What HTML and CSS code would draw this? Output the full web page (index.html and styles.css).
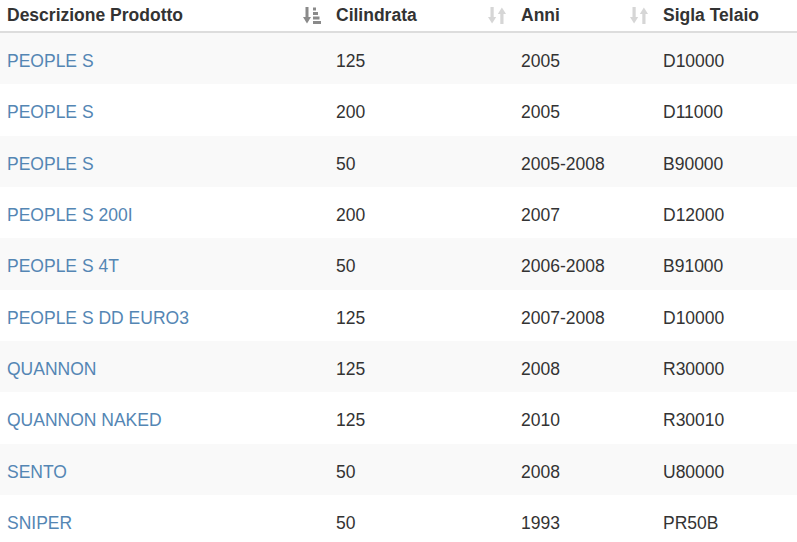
FILE: index.html
```html
<!DOCTYPE html>
<html>
<head>
<meta charset="utf-8">
<link rel="stylesheet" href="styles.css">
</head>
<body>
<table class="grid">
  <colgroup>
    <col class="c1"><col class="c2"><col class="c3"><col class="c4">
  </colgroup>
  <thead>
    <tr>
      <th><div class="th-in"><span>Descrizione Prodotto</span>
        <svg class="sort active" viewBox="0 0 18 17" width="18" height="17">
          <rect x="2.5" y="0" width="3" height="11"/>
          <polygon points="0,10 8,10 4,16.5"/>
          <rect x="10" y="0.5" width="3" height="3"/>
          <rect x="10" y="5" width="5" height="3"/>
          <rect x="10" y="9.5" width="6.5" height="3"/>
          <rect x="10" y="14" width="8" height="3"/>
        </svg></div></th>
      <th><div class="th-in"><span>Cilindrata</span>
        <svg class="sort" viewBox="0 0 18 17" width="18" height="17">
          <rect x="2.5" y="0" width="3.2" height="11"/>
          <polygon points="0,10 8.2,10 4.1,16.5"/>
          <rect x="12.3" y="6" width="3.2" height="11"/>
          <polygon points="9.8,7 18,7 13.9,0.5"/>
        </svg></div></th>
      <th><div class="th-in"><span>Anni</span>
        <svg class="sort" viewBox="0 0 18 17" width="18" height="17">
          <rect x="2.5" y="0" width="3.2" height="11"/>
          <polygon points="0,10 8.2,10 4.1,16.5"/>
          <rect x="12.3" y="6" width="3.2" height="11"/>
          <polygon points="9.8,7 18,7 13.9,0.5"/>
        </svg></div></th>
      <th><div class="th-in"><span>Sigla Telaio</span></div></th>
    </tr>
  </thead>
  <tbody>
    <tr><td><a href="#">PEOPLE S</a></td><td>125</td><td>2005</td><td>D10000</td></tr>
    <tr><td><a href="#">PEOPLE S</a></td><td>200</td><td>2005</td><td>D11000</td></tr>
    <tr><td><a href="#">PEOPLE S</a></td><td>50</td><td>2005-2008</td><td>B90000</td></tr>
    <tr><td><a href="#">PEOPLE S 200I</a></td><td>200</td><td>2007</td><td>D12000</td></tr>
    <tr><td><a href="#">PEOPLE S 4T</a></td><td>50</td><td>2006-2008</td><td>B91000</td></tr>
    <tr><td><a href="#">PEOPLE S DD EURO3</a></td><td>125</td><td>2007-2008</td><td>D10000</td></tr>
    <tr><td><a href="#">QUANNON</a></td><td>125</td><td>2008</td><td>R30000</td></tr>
    <tr><td><a href="#">QUANNON NAKED</a></td><td>125</td><td>2010</td><td>R30010</td></tr>
    <tr><td><a href="#">SENTO</a></td><td>50</td><td>2008</td><td>U80000</td></tr>
    <tr><td><a href="#">SNIPER</a></td><td>50</td><td>1993</td><td>PR50B</td></tr>
  </tbody>
</table>
</body>
</html>
```

FILE: styles.css
```css
html, body {
  margin: 0;
  padding: 0;
  background: #fff;
}
body {
  font-family: "Liberation Sans", Arial, sans-serif;
  font-size: 17.5px;
  color: #333;
}
.grid {
  width: 797px;
  border-collapse: collapse;
  table-layout: fixed;
}
.c1 { width: 328px; }
.c2 { width: 185px; }
.c3 { width: 142px; }
.c4 { width: 142px; }
.grid th {
  text-align: left;
  font-weight: bold;
  padding: 3px 7px 3px 8px;
  line-height: 25px;
  border-bottom: 2px solid #dddddd;
}
.grid th:first-child,
.grid td:first-child {
  padding-left: 7px;
}
.th-in {
  display: flex;
  align-items: center;
  justify-content: space-between;
}
.sort {
  fill: #d6d6d6;
  flex: none;
}
.sort.active {
  fill: #8a8a8a;
}
.grid td {
  padding: 16px 8px 10.33px 8px;
  line-height: 25px;
  vertical-align: top;
}
.grid tbody tr:nth-child(odd) {
  background: #f9f9f9;
}
.grid a {
  color: #5486b4;
  text-decoration: none;
}
```
